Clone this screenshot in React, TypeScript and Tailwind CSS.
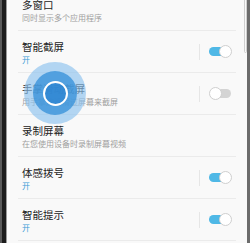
import React from "react";

const font = { fontFamily: '"Noto Sans CJK SC", "Noto Sans", sans-serif' };

function Toggle({ on }: { on: boolean }) {
  return (
    <div className="relative w-[22px] h-[13px]">
      <div
        className={
          "absolute top-[2px] h-[9px] rounded-full " +
          (on ? "left-[0px] w-[20px] bg-[#4fb8e6]" : "left-[3px] w-[19px] bg-[#d4d4d4]")
        }
      />
      <div
        className={
          "absolute top-0 w-[13px] h-[13px] rounded-full bg-white border border-[#cfcfcf] " +
          (on ? "left-[10px]" : "left-0")
        }
      />
    </div>
  );
}

function Row({
  title,
  sub,
  blue,
  toggle,
}: {
  title: string;
  sub: string;
  blue?: boolean;
  toggle?: boolean | null;
}) {
  return (
    <div className="mx-[11px] h-[42px] border-b border-[#ebebeb] flex items-center pl-[4px] pr-[5px]">
      <div className="flex-1 flex flex-col pt-[2px]">
        <div className="text-[10.5px] leading-[13px] text-[#222]">{title}</div>
        <div
          className={
            "text-[8px] leading-[11px] mt-[1px] " + (blue ? "text-[#3b9bd6]" : "text-[#a0a0a0]")
          }
        >
          {sub}
        </div>
      </div>
      {toggle !== undefined && toggle !== null && (
        <div className="flex items-center">
          <div className="w-px h-[16px] bg-[#e6e6e6]" />
          <div className="ml-[9px]">
            <Toggle on={toggle} />
          </div>
        </div>
      )}
    </div>
  );
}

export default function App() {
  return (
    <div className="relative w-[250px] h-[243px] overflow-hidden bg-[#f9f9f9] flex" style={font}>
      <div className="w-[2px] h-full bg-[#5a5a5a]" />
      <div className="w-[4px] h-full bg-[#1c1c1c]" />
      <div className="w-px h-full bg-[#9a9a9a]" />
      <div className="flex-1 h-full overflow-hidden">
        <div className="-mt-[11px]">
          <Row title="多窗口" sub="同时显示多个应用程序" />
          <Row title="智能截屏" sub="开" blue toggle={true} />
          <Row title="手掌滑动截屏" sub="用手掌边沿滑过屏幕来截屏" toggle={false} />
          <Row title="录制屏幕" sub="在您使用设备时录制屏幕视频" />
          <Row title="体感拨号" sub="开" blue toggle={true} />
          <Row title="智能提示" sub="开" blue toggle={true} />
        </div>
      </div>
      <div className="w-[3px] h-full bg-[#6c6c6c]" />
      <div className="absolute left-[244px] -top-[6px] w-[3px] h-[59px] border border-[#cfcfcf] rounded-b-[2px]" />
      <div className="absolute left-[24px] top-[62px] w-[62px] h-[62px] rounded-full bg-[rgba(140,194,238,0.65)] flex items-center justify-center">
        <div className="w-[44px] h-[44px] rounded-full bg-[rgba(58,146,218,0.8)] flex items-center justify-center">
          <div className="w-[25px] h-[25px] rounded-full border-2 border-white bg-[rgba(42,130,208,0.7)]" />
        </div>
      </div>
    </div>
  );
}
